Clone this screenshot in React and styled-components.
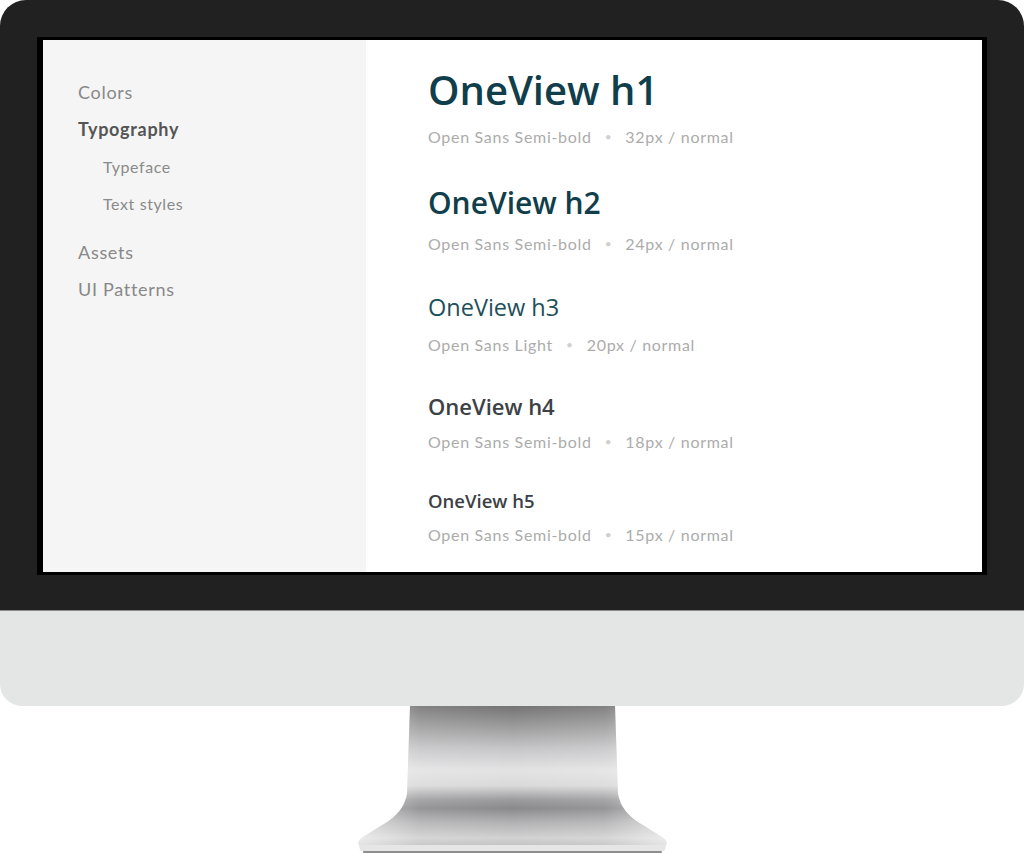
import styled, { createGlobalStyle } from "styled-components";

const GlobalStyle = createGlobalStyle`
  html, body {
    margin: 0;
    padding: 0;
    background: #ffffff;
  }
  * {
    box-sizing: border-box;
  }
`;

const navItems = [
  { label: "Colors" },
  { label: "Typography", active: true, children: ["Typeface", "Text styles"] },
  { label: "Assets" },
  { label: "UI Patterns" },
];

const styles = [
  { name: "OneView h1", level: 1, font: "Open Sans Semi-bold", size: "32px / normal" },
  { name: "OneView h2", level: 2, font: "Open Sans Semi-bold", size: "24px / normal" },
  { name: "OneView h3", level: 3, font: "Open Sans Light", size: "20px / normal" },
  { name: "OneView h4", level: 4, font: "Open Sans Semi-bold", size: "18px / normal" },
  { name: "OneView h5", level: 5, font: "Open Sans Semi-bold", size: "15px / normal" },
];

const headingLook = {
  1: { size: 40, lh: 48, weight: 600, color: "#103e4b" },
  2: { size: 30, lh: 36, weight: 600, color: "#103e4b" },
  3: { size: 23.5, lh: 30, weight: 400, color: "#1d4f5b" },
  4: { size: 22, lh: 26, weight: 600, color: "#3c4146" },
  5: { size: 18.5, lh: 22, weight: 600, color: "#3c4146" },
};

const STAND_SHAPE =
  "M53 0 L258 0 L261 88 Q264 106 284 118 L305 131 Q311 135 309 139 L307 142 L4 142 L2 139 Q0 135 6 131 L27 118 Q47 106 50 88 Z";

const Stand = () => (
  <StandSvg width="311" height="148" viewBox="0 0 311 148">
    <defs>
      <linearGradient id="standV" x1="0" y1="0" x2="0" y2="1">
        <stop offset="0" stopColor="#747474" />
        <stop offset="0.12" stopColor="#959595" />
        <stop offset="0.3" stopColor="#c6c6c8" />
        <stop offset="0.45" stopColor="#e3e3e4" />
        <stop offset="0.56" stopColor="#dadada" />
        <stop offset="0.66" stopColor="#9c9c9e" />
        <stop offset="0.72" stopColor="#8a8a8c" />
        <stop offset="0.82" stopColor="#b2b2b4" />
        <stop offset="0.93" stopColor="#d2d2d2" />
        <stop offset="1" stopColor="#bdbdbd" />
      </linearGradient>
      <linearGradient id="standH" x1="0" y1="0" x2="1" y2="0">
        <stop offset="0" stopColor="#ffffff" stopOpacity="0.55" />
        <stop offset="0.2" stopColor="#ffffff" stopOpacity="0.1" />
        <stop offset="0.5" stopColor="#ffffff" stopOpacity="0" />
        <stop offset="0.8" stopColor="#ffffff" stopOpacity="0.1" />
        <stop offset="1" stopColor="#ffffff" stopOpacity="0.55" />
      </linearGradient>
    </defs>
    <path d={STAND_SHAPE} fill="url(#standV)" />
    <path d={STAND_SHAPE} fill="url(#standH)" />
    <path d="M2 139 L309 139 L308 144 Q306 146 300 146 L11 146 Q5 146 3 144 Z" fill="#e6e6e6" />
    <rect x="6" y="145" width="299" height="2" rx="1" fill="#8d8d8d" />
  </StandSvg>
);

const App = () => {
  return (
    <>
      <GlobalStyle />
      <Page>
        <Bezel>
          <Screen>
            <Sidebar>
              {navItems.map((item) => (
                <NavGroup key={item.label} nested={!!item.children}>
                  <NavItem active={item.active}>{item.label}</NavItem>
                  {item.children &&
                    item.children.map((c) => <SubItem key={c}>{c}</SubItem>)}
                </NavGroup>
              ))}
            </Sidebar>
            <Content>
              {styles.map((s) => (
                <StyleBlock key={s.name}>
                  <Heading level={s.level}>{s.name}</Heading>
                  <Meta>
                    <span>{s.font}</span>
                    <Dot>•</Dot>
                    <span>{s.size}</span>
                  </Meta>
                </StyleBlock>
              ))}
            </Content>
          </Screen>
        </Bezel>
        <Chin />
        <StandWrap>
          <Stand />
        </StandWrap>
      </Page>
    </>
  );
};

export default App;

const Page = styled.div`
  width: 1024px;
  height: 854px;
  display: flex;
  flex-direction: column;
`;

const Bezel = styled.div`
  height: 611px;
  background: #212121;
  border-radius: 26px 26px 0 0;
  padding: 37px 37px 0 37px;
  border-bottom: 1px solid #8a8a8a;
`;

const Screen = styled.div`
  height: 538px;
  display: flex;
  border-style: solid;
  border-color: #000;
  border-width: 3px 5px 3px 6px;
  box-shadow: inset 0 -1px 0 #b0b0b0;
  background: #fff;
`;

const Sidebar = styled.nav`
  width: 323px;
  background: #f5f5f5;
  padding: 34px 0 0 35px;
  font-family: "Lato", "Open Sans", sans-serif;
`;

const NavGroup = styled.div`
  display: flex;
  flex-direction: column;
  margin-bottom: ${(p) => (p.nested ? "12px" : "0")};
`;

const NavItem = styled.div`
  font-size: 18px;
  line-height: 37px;
  letter-spacing: 0.7px;
  font-weight: ${(p) => (p.active ? 700 : 400)};
  color: ${(p) => (p.active ? "#555555" : "#888888")};
`;

const SubItem = styled.div`
  font-size: 16px;
  line-height: 37px;
  letter-spacing: 0.6px;
  color: #8a8a8a;
  padding-left: 25px;
`;

const Content = styled.main`
  flex: 1;
  padding: 26px 0 0 62px;
  background: #ffffff;
`;

const StyleBlock = styled.section`
  & + & {
    margin-top: 38px;
  }
`;

const Heading = styled.div`
  font-family: "Open Sans", sans-serif;
  font-size: ${(p) => headingLook[p.level].size}px;
  line-height: ${(p) => headingLook[p.level].lh}px;
  font-weight: ${(p) => headingLook[p.level].weight};
  color: ${(p) => headingLook[p.level].color};
  margin-bottom: 13px;
`;

const Meta = styled.div`
  display: flex;
  align-items: center;
  font-family: "Lato", "Open Sans", sans-serif;
  font-size: 16px;
  line-height: 20px;
  letter-spacing: 0.7px;
  color: #acacac;
`;

const Dot = styled.span`
  color: #d0d0d0;
  font-size: 12px;
  margin: 0 13px;
`;

const Chin = styled.div`
  height: 95px;
  background: #e4e6e5;
  border-radius: 0 0 22px 22px;
`;

const StandWrap = styled.div`
  display: flex;
  padding-left: 357px;
`;

const StandSvg = styled.svg`
  display: block;
`;
